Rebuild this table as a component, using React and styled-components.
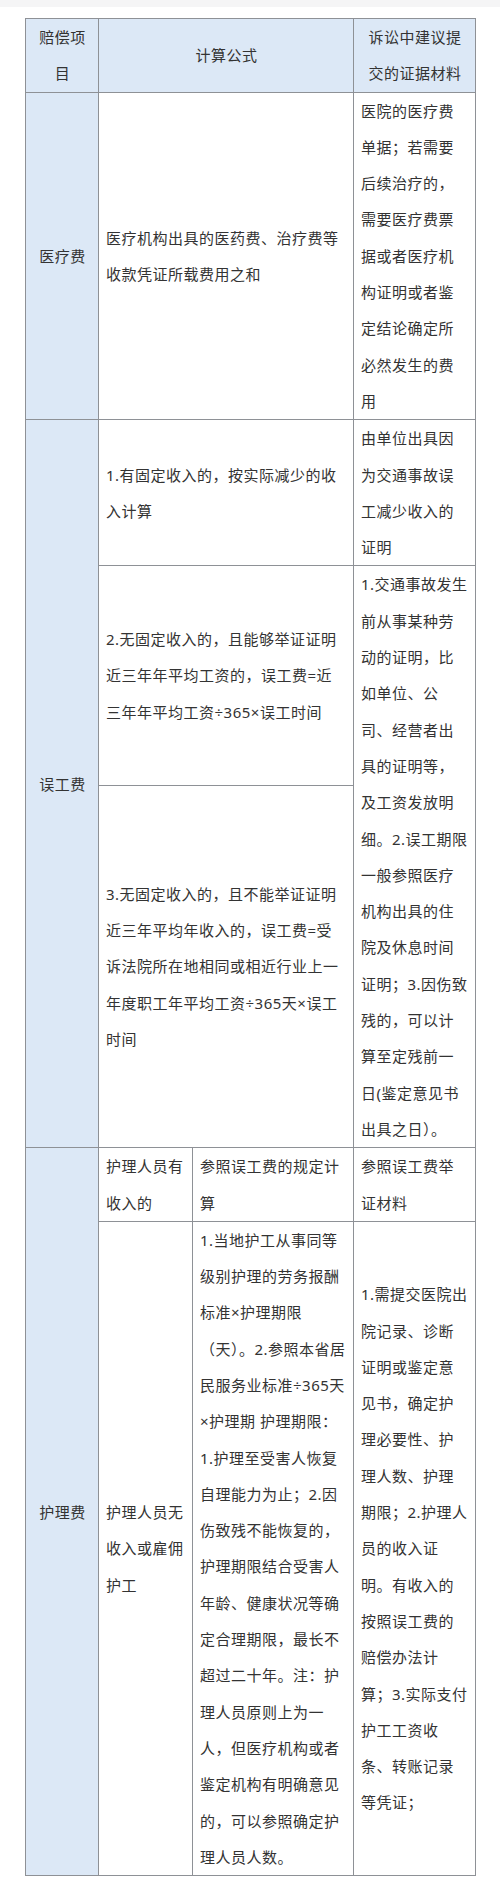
import styled, { createGlobalStyle } from "styled-components";

const GlobalStyle = createGlobalStyle`
  body {
    margin: 0;
    background: #ffffff;
    font-family: "Noto Sans", "Noto Sans CJK SC", sans-serif;
    color: #333333;
  }
`;

const TopStrip = styled.div`
  height: 7px;
  background: #f5f5f6;
`;

const Page = styled.div`
  padding: 11px 25px 30px 25px;
`;

const Table = styled.table`
  width: 450px;
  border-collapse: collapse;
  table-layout: fixed;
  font-size: 15px;
  letter-spacing: 0.5px;
  line-height: 36.3px;
`;

const Row = styled.tr`
  height: ${(props) => (props.$h ? `${props.$h}px` : "auto")};
`;

const HeadCell = styled.th`
  background: #dce8f6;
  border: 1px solid #8e9196;
  padding: 0 6px 0 7px;
  font-weight: 400;
  text-align: center;
  vertical-align: middle;
`;

const LabelCell = styled.td`
  background: #dce8f6;
  border: 1px solid #8e9196;
  padding: 0 6px 0 7px;
  text-align: center;
  vertical-align: middle;
`;

const Cell = styled.td`
  border: 1px solid #8e9196;
  padding: 0 6px 0 7px;
  text-align: left;
  vertical-align: middle;
  word-break: break-all;
`;

const App = () => {
  return (
    <>
      <GlobalStyle />
      <TopStrip />
      <Page>
        <Table>
          <colgroup>
            <col style={{ width: 73 }} />
            <col style={{ width: 94 }} />
            <col style={{ width: 161 }} />
            <col style={{ width: 122 }} />
          </colgroup>
          <thead>
            <tr>
              <HeadCell>赔偿项目</HeadCell>
              <HeadCell colSpan={2}>计算公式</HeadCell>
              <HeadCell>诉讼中建议提交的证据材料</HeadCell>
            </tr>
          </thead>
          <tbody>
            <tr>
              <LabelCell>医疗费</LabelCell>
              <Cell colSpan={2}>医疗机构出具的医药费、治疗费等收款凭证所载费用之和</Cell>
              <Cell>医院的医疗费单据；若需要后续治疗的，需要医疗费票据或者医疗机构证明或者鉴定结论确定所必然发生的费用</Cell>
            </tr>
            <Row>
              <LabelCell rowSpan={3}>误工费</LabelCell>
              <Cell colSpan={2}>1.有固定收入的，按实际减少的收入计算</Cell>
              <Cell>由单位出具因为交通事故误工减少收入的证明</Cell>
            </Row>
            <Row $h={219}>
              <Cell colSpan={2}>2.无固定收入的，且能够举证证明近三年年平均工资的，误工费=近三年年平均工资÷365×误工时间</Cell>
              <Cell rowSpan={2}>
                1.交通事故发生前从事某种劳动的证明，比如单位、公司、经营者出具的证明等，及工资发放明细。2.误工期限一般参照医疗机构出具的住院及休息时间证明；3.因伤致残的，可以计算至定残前一日(鉴定意见书出具之日）。
              </Cell>
            </Row>
            <Row $h={362}>
              <Cell colSpan={2}>3.无固定收入的，且不能举证证明近三年平均年收入的，误工费=受诉法院所在地相同或相近行业上一年度职工年平均工资÷365天×误工时间</Cell>
            </Row>
            <tr>
              <LabelCell rowSpan={2}>护理费</LabelCell>
              <Cell>护理人员有收入的</Cell>
              <Cell>参照误工费的规定计算</Cell>
              <Cell>参照误工费举证材料</Cell>
            </tr>
            <tr>
              <Cell>护理人员无收入或雇佣护工</Cell>
              <Cell>
                1.当地护工从事同等级别护理的劳务报酬标准×护理期限（天）。2.参照本省居民服务业标准÷365天×护理期 护理期限：1.护理至受害人恢复自理能力为止；2.因伤致残不能恢复的，护理期限结合受害人年龄、健康状况等确定合理期限，最长不超过二十年。注：护理人员原则上为一人，但医疗机构或者鉴定机构有明确意见的，可以参照确定护理人员人数。
              </Cell>
              <Cell>
                1.需提交医院出院记录、诊断证明或鉴定意见书，确定护理必要性、护理人数、护理期限；2.护理人员的收入证明。有收入的按照误工费的赔偿办法计算；3.实际支付护工工资收条、转账记录等凭证；
              </Cell>
            </tr>
          </tbody>
        </Table>
      </Page>
    </>
  );
};

export default App;
